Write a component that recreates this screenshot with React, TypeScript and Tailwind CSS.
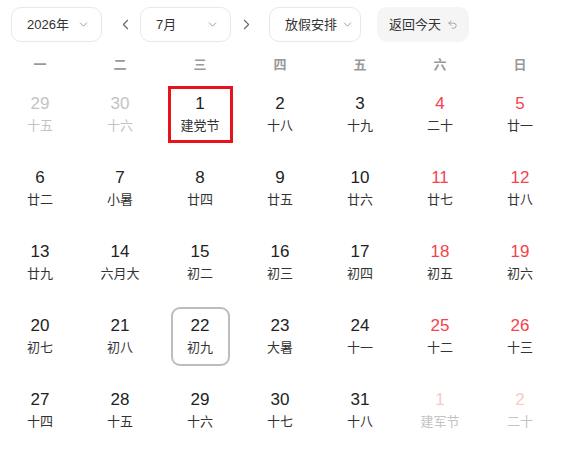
import { ChevronDown, ChevronLeft, ChevronRight, Undo2 } from "lucide-react";

type Day = { n: number; lunar: string; muted?: boolean; weekend?: boolean };

const weeks: Day[][] = [
  [
    { n: 29, lunar: "十五", muted: true },
    { n: 30, lunar: "十六", muted: true },
    { n: 1, lunar: "建党节" },
    { n: 2, lunar: "十八" },
    { n: 3, lunar: "十九" },
    { n: 4, lunar: "二十", weekend: true },
    { n: 5, lunar: "廿一", weekend: true },
  ],
  [
    { n: 6, lunar: "廿二" },
    { n: 7, lunar: "小暑" },
    { n: 8, lunar: "廿四" },
    { n: 9, lunar: "廿五" },
    { n: 10, lunar: "廿六" },
    { n: 11, lunar: "廿七", weekend: true },
    { n: 12, lunar: "廿八", weekend: true },
  ],
  [
    { n: 13, lunar: "廿九" },
    { n: 14, lunar: "六月大" },
    { n: 15, lunar: "初二" },
    { n: 16, lunar: "初三" },
    { n: 17, lunar: "初四" },
    { n: 18, lunar: "初五", weekend: true },
    { n: 19, lunar: "初六", weekend: true },
  ],
  [
    { n: 20, lunar: "初七" },
    { n: 21, lunar: "初八" },
    { n: 22, lunar: "初九" },
    { n: 23, lunar: "大暑" },
    { n: 24, lunar: "十一" },
    { n: 25, lunar: "十二", weekend: true },
    { n: 26, lunar: "十三", weekend: true },
  ],
  [
    { n: 27, lunar: "十四" },
    { n: 28, lunar: "十五" },
    { n: 29, lunar: "十六" },
    { n: 30, lunar: "十七" },
    { n: 31, lunar: "十八" },
    { n: 1, lunar: "建军节", muted: true, weekend: true },
    { n: 2, lunar: "二十", muted: true, weekend: true },
  ],
];

const weekdays = ["一", "二", "三", "四", "五", "六", "日"];

function Select({ label, width }: { label: string; width: string }) {
  return (
    <div
      className={`flex h-[35px] ${width} items-center justify-between rounded-[10px] border border-[#e8e8e8] bg-white pl-[15px] pr-[11px] text-[13px] text-[#333]`}
    >
      <span>{label}</span>
      <ChevronDown size={13} strokeWidth={1.5} className="text-[#888]" />
    </div>
  );
}

export default function App() {
  return (
    <div
      className="h-[449px] w-[561px] bg-white"
      style={{ fontFamily: '"Liberation Sans", "Noto Sans CJK SC", sans-serif' }}
    >
      {/* top controls */}
      <div className="flex items-center px-[11px] pt-[7px]">
        <Select label="2026年" width="w-[91px]" />
        <ChevronLeft size={17} strokeWidth={1.5} className="ml-[15px] text-[#666]" />
        <div className="ml-[6px]">
          <Select label="7月" width="w-[91px]" />
        </div>
        <ChevronRight size={17} strokeWidth={1.5} className="ml-[7px] text-[#666]" />
        <div className="ml-[14px] flex h-[35px] w-[92px] items-center justify-between rounded-[10px] border border-[#e8e8e8] pl-[15px] pr-[6px] text-[13px] text-[#333]">
          <span>放假安排</span>
          <ChevronDown size={13} strokeWidth={1.5} className="text-[#888]" />
        </div>
        <div className="ml-[16px] flex h-[35px] w-[92px] items-center gap-[6px] rounded-[10px] bg-[#f5f5f5] pl-[12px] text-[13px] text-[#333]">
          <span>返回今天</span>
          <Undo2 size={11} strokeWidth={1.8} className="text-[#999]" />
        </div>
      </div>

      {/* weekday header */}
      <div className="mt-[12px] grid h-[22px] w-[560px] grid-cols-7">
        {weekdays.map((w) => (
          <div key={w} className="flex items-center justify-center text-[13px] font-bold text-[#999]">
            {w}
          </div>
        ))}
      </div>

      {/* days */}
      <div className="mt-[1px] grid w-[560px] grid-cols-7">
        {weeks.flat().map((d, i) => {
          const isFestival = i === 2;
          const isSelected = i === 23;
          let numColor = d.weekend ? "text-[#f5424f]" : "text-[#222]";
          let lunarColor = "text-[#333]";
          if (d.muted) {
            numColor = d.weekend ? "text-[#fcc8c8]" : "text-[#c3c3c3]";
            lunarColor = "text-[#c3c3c3]";
          }
          let box = "w-[58px] h-[58px] border-2 border-transparent";
          if (isFestival) box = "w-[65px] h-[57px] border-[3px] border-[#e8121a]";
          if (isSelected) box = "w-[59px] h-[59px] border-2 border-[#bdbdbd] rounded-[9px]";
          return (
            <div key={i} className="flex h-[74px] items-center justify-center">
              <div className={`flex flex-col items-center justify-center ${box}`}>
                <span className={`text-[17px] leading-[20px] ${numColor}`}>{d.n}</span>
                <span className={`mt-[3px] text-[13px] leading-[17px] ${lunarColor}`}>{d.lunar}</span>
              </div>
            </div>
          );
        })}
      </div>
    </div>
  );
}
